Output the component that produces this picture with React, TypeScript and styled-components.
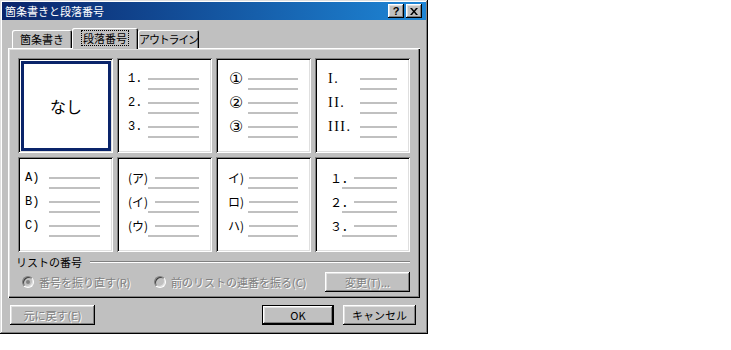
import React from 'react';
import styled, { createGlobalStyle, css } from 'styled-components';

const GlobalStyle = createGlobalStyle`
  html, body {
    margin: 0;
    padding: 0;
    background: #fff;
  }
  * {
    box-sizing: border-box;
  }
  body {
    font-family: "Noto Sans CJK JP", "Liberation Sans", sans-serif;
    font-size: 11px;
    color: #000;
  }
`;

const raised = css`
  box-shadow: inset -1px -1px #000, inset 1px 1px #fff, inset -2px -2px #808080,
    inset 2px 2px #dfdfdf;
`;

const disabledText = css`
  color: #808080;
  text-shadow: 1px 1px 0 #fff;
`;

const Window = styled.div`
  width: 428px;
  height: 334px;
  padding: 2px;
  display: flex;
  flex-direction: column;
  background: #c0c0c0;
  box-shadow: inset -1px -1px #000, inset 1px 1px #dfdfdf, inset -2px -2px #808080,
    inset 2px 2px #fff;
`;

const TitleBar = styled.div`
  height: 18px;
  display: flex;
  align-items: center;
  padding: 0 4px 0 3px;
  background: linear-gradient(to right, #0a246a, #1e86d6);
  color: #fff;
`;

const Title = styled.span`
  flex: 1;
  font-size: 11px;
  line-height: 18px;
  white-space: nowrap;
`;

const CaptionButton = styled.div`
  width: 16px;
  height: 14px;
  margin-left: 2px;
  display: flex;
  align-items: center;
  justify-content: center;
  background: #c0c0c0;
  color: #000;
  font: bold 11px "Liberation Sans", sans-serif;
  ${raised};
`;

const Body = styled.div`
  flex: 1;
  display: flex;
  flex-direction: column;
  padding: 8px 6px 0 6px;
`;

const TabStrip = styled.div`
  height: 20px;
  display: flex;
  align-items: flex-end;
  padding-left: 4px;
`;

const Tab = styled.div<{ $active?: boolean; $w: number }>`
  position: relative;
  width: ${(p) => p.$w}px;
  height: ${(p) => (p.$active ? 21 : 18)}px;
  margin-bottom: ${(p) => (p.$active ? -1 : 0)}px;
  z-index: ${(p) => (p.$active ? 1 : 0)};
  display: flex;
  align-items: center;
  justify-content: center;
  padding-bottom: ${(p) => (p.$active ? 1 : 0)}px;
  background: #c0c0c0;
  border-radius: 2px 2px 0 0;
  line-height: 14px;
  white-space: nowrap;
  box-shadow: inset 1px 1px #fff, inset -1px 0 #000, inset -2px 0 #808080;
`;

const TightText = styled.span`
  letter-spacing: -1.2px;
`;

const FocusLabel = styled.span`
  padding: 0 1px;
  outline: 1px dotted #000;
`;

const TabPanel = styled.div`
  height: 250px;
  padding: 10px 10px 0 10px;
  display: flex;
  flex-direction: column;
  box-shadow: inset 1px 1px #fff, inset -1px -1px #000, inset -2px -2px #808080,
    inset 2px 2px #dfdfdf;
`;

const CardGrid = styled.div`
  display: grid;
  grid-template-columns: repeat(4, 95px);
  grid-auto-rows: 95px;
  gap: 4px;
`;

const Card = styled.div<{ $labelX: number }>`
  background: #fff;
  padding: 14px 13px 0 ${(p) => p.$labelX}px;
  box-shadow: inset 1px 1px #808080, inset -1px -1px #fff, inset 2px 2px #000,
    inset -2px -2px #dfdfdf;
`;

const NoneCard = styled.div`
  background: #fff;
  padding: 3px 2px 2px 3px;
  box-shadow: inset 1px 1px #808080, inset -1px -1px #fff, inset 2px 2px #000,
    inset -2px -2px #dfdfdf;
`;

const Selection = styled.div`
  height: 100%;
  display: flex;
  align-items: center;
  justify-content: center;
  border: 3px solid #0a246a;
  font-size: 16px;
`;

const Item = styled.div<{ $col: number }>`
  display: grid;
  grid-template-columns: ${(p) => p.$col}px 1fr;
  grid-template-rows: 14px 10px;
`;

const ItemLabel = styled.span<{ $font: string }>`
  line-height: 14px;
  white-space: nowrap;
  color: #000;
  ${(p) =>
    p.$font === 'mono' &&
    css`
      font-family: "Liberation Mono", monospace;
      font-size: 12px;
    `}
  ${(p) =>
    p.$font === 'serif' &&
    css`
      font-family: "Liberation Serif", serif;
      font-size: 14px;
      letter-spacing: 1.5px;
    `}
  ${(p) =>
    p.$font === 'circle' &&
    css`
      font-family: "DejaVu Sans", sans-serif;
      font-size: 16px;
    `}
  ${(p) =>
    p.$font === 'cjk' &&
    css`
      font-family: "Noto Sans CJK JP", sans-serif;
      font-size: 12px;
    `}
`;

const Line = styled.div<{ $second?: boolean; $shift?: number }>`
  height: 2px;
  background: #c0c0c0;
  align-self: ${(p) => (p.$second ? 'start' : 'center')};
  margin-top: ${(p) => (p.$second ? 2 : 0)}px;
  margin-left: ${(p) => p.$shift ?? 0}px;
  grid-column: 2;
`;

const GroupHeader = styled.div`
  margin-top: 4px;
  height: 12px;
  display: flex;
  align-items: center;
`;

const GroupLabel = styled.span`
  margin-left: -2px;
  line-height: 12px;
`;

const Etch = styled.div`
  flex: 1;
  height: 2px;
  margin-left: 8px;
  border-top: 1px solid #808080;
  border-bottom: 1px solid #fff;
`;

const OptionRow = styled.div`
  margin-top: 4px;
  height: 20px;
  display: flex;
  align-items: center;
  padding-left: 4px;
`;

const RadioOption = styled.div<{ $w?: number }>`
  display: flex;
  align-items: center;
  gap: 5px;
  width: ${(p) => (p.$w ? `${p.$w}px` : 'auto')};
  ${disabledText};
`;

const RadioCircle = styled.span<{ $checked?: boolean }>`
  width: 12px;
  height: 12px;
  border-radius: 50%;
  display: flex;
  align-items: center;
  justify-content: center;
  background: #c0c0c0;
  border: 1px solid;
  border-color: #808080 #fff #fff #808080;
  box-shadow: inset 1px 1px #404040, inset -1px -1px #dfdfdf;
  &::after {
    content: '';
    width: 4px;
    height: 4px;
    border-radius: 50%;
    background: ${(p) => (p.$checked ? '#808080' : 'transparent')};
  }
`;

const Button = styled.div<{ $w: number; $disabled?: boolean; $default?: boolean }>`
  width: ${(p) => p.$w}px;
  height: 20px;
  display: flex;
  align-items: center;
  justify-content: center;
  background: #c0c0c0;
  line-height: 14px;
  ${raised};
  ${(p) => p.$disabled && disabledText};
  ${(p) =>
    p.$default &&
    css`
      border: 1px solid #000;
    `}
`;

const Footer = styled.div`
  margin-top: 7px;
  display: flex;
  align-items: center;
  gap: 9px;
  padding: 0 4px 0 2px;
`;

const Spacer = styled.div`
  flex: 1;
`;

const CloseIcon = () => (
  <svg width="8" height="7" viewBox="0 0 8 7">
    <path d="M0 0h2l2 2.5L6 0h2L5 3.5 8 7H6L4 4.5 2 7H0l3-3.5z" fill="#000" />
  </svg>
);

type ListCard = {
  labelX: number;
  lineX: number;
  firstX?: number;
  font: string;
  labels: string[];
};

const cards: ListCard[] = [
  { labelX: 11, lineX: 31, font: 'mono', labels: ['1.', '2.', '3.'] },
  { labelX: 13, lineX: 32, font: 'circle', labels: ['①', '②', '③'] },
  { labelX: 13, lineX: 45, font: 'serif', labels: ['I.', 'II.', 'III.'] },
  { labelX: 7, lineX: 31, font: 'mono', labels: ['A)', 'B)', 'C)'] },
  { labelX: 11, lineX: 31, firstX: 38, font: 'cjk', labels: ['(ア)', '(イ)', '(ウ)'] },
  { labelX: 12, lineX: 32, firstX: 33, font: 'cjk', labels: ['イ)', 'ロ)', 'ハ)'] },
  { labelX: 15, lineX: 27, firstX: 39, font: 'cjk', labels: ['１．', '２．', '３．'] },
];

function NumberCard({ card }: { card: ListCard }) {
  const col = card.lineX - card.labelX;
  const shift = (card.firstX ?? card.lineX) - card.lineX;
  return (
    <Card $labelX={card.labelX}>
      {card.labels.map((label) => (
        <Item key={label} $col={col}>
          <ItemLabel $font={card.font}>{label}</ItemLabel>
          <Line $shift={shift} />
          <Line $second />
        </Item>
      ))}
    </Card>
  );
}

function App() {
  return (
    <>
      <GlobalStyle />
      <Window>
        <TitleBar>
          <Title>箇条書きと段落番号</Title>
          <CaptionButton>?</CaptionButton>
          <CaptionButton>
            <CloseIcon />
          </CaptionButton>
        </TitleBar>
        <Body>
          <TabStrip>
            <Tab $w={60}>箇条書き</Tab>
            <Tab $w={66} $active>
              <FocusLabel>段落番号</FocusLabel>
            </Tab>
            <Tab $w={61}>
              <TightText>アウトライン</TightText>
            </Tab>
          </TabStrip>
          <TabPanel>
            <CardGrid>
              <NoneCard>
                <Selection>なし</Selection>
              </NoneCard>
              {cards.map((card, i) => (
                <NumberCard key={i} card={card} />
              ))}
            </CardGrid>
            <GroupHeader>
              <GroupLabel>リストの番号</GroupLabel>
              <Etch />
            </GroupHeader>
            <OptionRow>
              <RadioOption $w={132}>
                <RadioCircle $checked />
                番号を振り直す(R)
              </RadioOption>
              <RadioOption>
                <RadioCircle />
                前のリストの連番を振る(C)
              </RadioOption>
              <Spacer />
              <Button $w={85} $disabled>
                変更(T)...
              </Button>
            </OptionRow>
          </TabPanel>
          <Footer>
            <Button $w={85} $disabled>
              元に戻す(E)
            </Button>
            <Spacer />
            <Button $w={72} $default>
              OK
            </Button>
            <Button $w={73}>キャンセル</Button>
          </Footer>
        </Body>
      </Window>
    </>
  );
}

export default App;
